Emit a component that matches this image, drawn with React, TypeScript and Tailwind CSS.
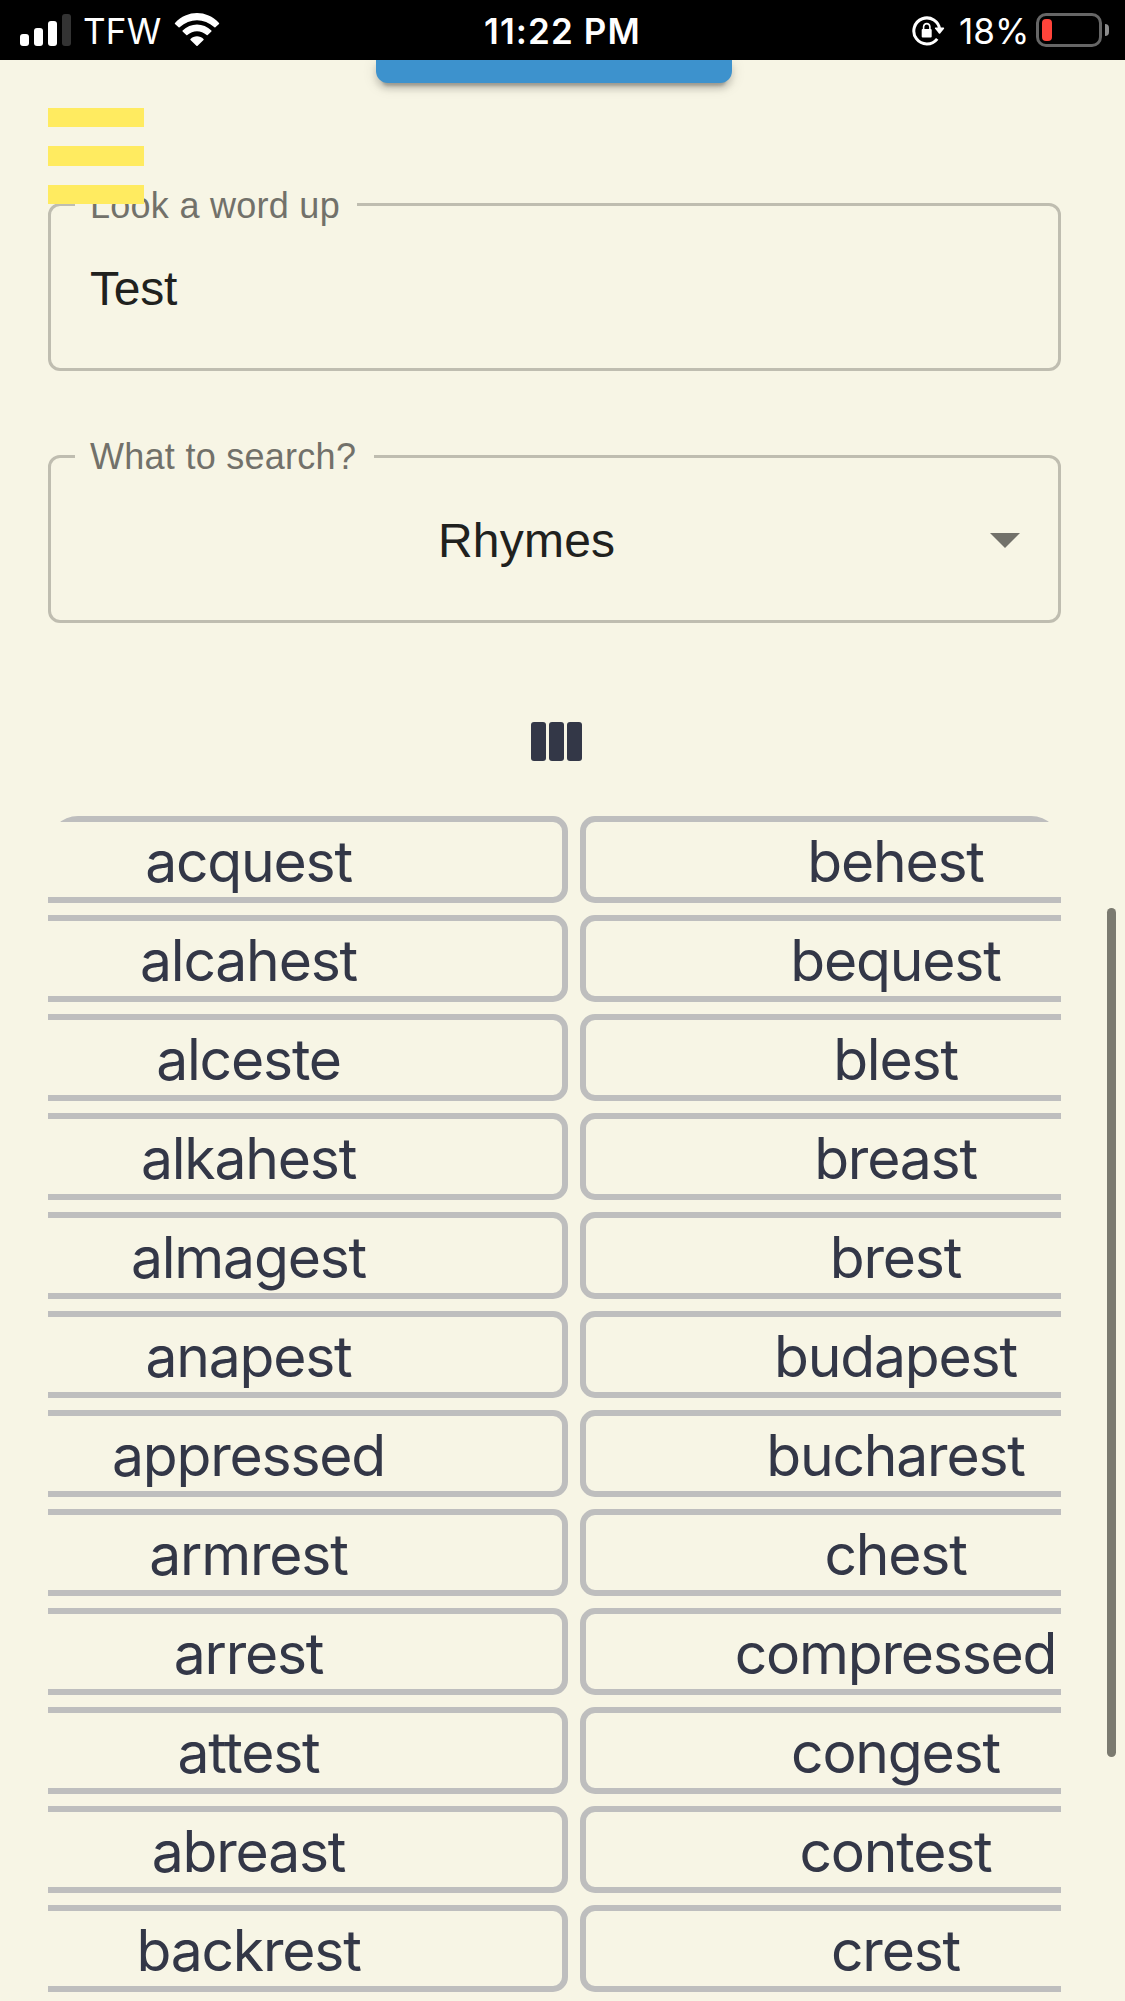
import type { ReactNode } from "react";

const rows: [string, string][] = [
  ["acquest", "behest"],
  ["alcahest", "bequest"],
  ["alceste", "blest"],
  ["alkahest", "breast"],
  ["almagest", "brest"],
  ["anapest", "budapest"],
  ["appressed", "bucharest"],
  ["armrest", "chest"],
  ["arrest", "compressed"],
  ["attest", "congest"],
  ["abreast", "contest"],
  ["backrest", "crest"],
];

function StatusBar() {
  return (
    <header className="relative z-20 flex h-[60px] shrink-0 items-center justify-between bg-black pr-4 pl-5 text-[35px] text-white">
      <div className="flex items-center">
        <div className="flex h-8 items-end gap-[5px]">
          <span className="h-3 w-[9px] rounded-[3px] bg-white" />
          <span className="h-[18px] w-[9px] rounded-[3px] bg-white" />
          <span className="h-[25px] w-[9px] rounded-[3px] bg-white" />
          <span className="h-8 w-[9px] rounded-[3px] bg-[#333]" />
        </div>
        <span className="ml-3 w-[77px] pt-[3px] tracking-[0.2px]">TFW</span>
        <svg className="ml-[14px]" width="46" height="34" viewBox="0 0 46 34">
          <path d="M1 10 C13.5 -3.2 32.5 -3.2 45 10 Q45.4 10.5 45 11 L41.4 14.3 Q40.9 14.7 40.4 14.3 C30 5 16 5 5.6 14.3 Q5.1 14.7 4.6 14.3 L1 11 Q0.6 10.5 1 10 Z" fill="#fff" />
          <path d="M8.6 17.6 C16.5 9.4 29.5 9.4 37.4 17.6 Q37.8 18.1 37.4 18.6 L33.7 22.1 Q33.2 22.5 32.7 22.1 C27 17 19 17 13.3 22.1 Q12.8 22.5 12.3 22.1 L8.6 18.6 Q8.2 18.1 8.6 17.6 Z" fill="#fff" />
          <path d="M16.5 26 C20 22.4 26 22.4 29.5 26 Q30 26.5 29.5 27 L23.6 32.7 Q23 33.2 22.4 32.7 L16.5 27 Q16 26.5 16.5 26 Z" fill="#fff" />
        </svg>
      </div>
      <div className="absolute left-[484px] pt-[3px] leading-[57px] font-semibold tracking-[1.1px] whitespace-nowrap">11:22 PM</div>
      <div className="flex items-center">
        <svg width="34" height="32" viewBox="0 0 34 32">
          <path d="M28.3 15.5 A13 13 0 1 0 25.7 24.3" transform="translate(-0.5 0.5)" fill="none" stroke="#fff" strokeWidth="3" />
          <path d="M23 14.5 Q22.6 13.5 23.6 13.5 L31.6 13.5 Q32.6 13.7 32 14.7 L28.2 19.4 Q27.5 20 26.9 19.4 Z" fill="#fff" />
          <rect x="9.7" y="15" width="10" height="8.5" rx="1" fill="#fff" />
          <path d="M11.6 15.5 V12.6 a3.2 3.6 0 0 1 6.3 0 V15.5" fill="none" stroke="#fff" strokeWidth="1.6" />
        </svg>
        <span className="ml-[13px] w-[70px] pt-[3px] whitespace-nowrap">18%</span>
        <div className="ml-[7px] h-[34px] w-[66px] rounded-[10px] border-3 border-[#666] p-[3px]">
          <div className="h-[22px] w-[10px] rounded-[4px] bg-[#ff443a]" />
        </div>
        <div className="ml-[3px] h-3 w-1 rounded-r-full bg-[#8c8c8c]" />
      </div>
    </header>
  );
}

function Field({ label, legendClass, children }: { label: string; legendClass: string; children: ReactNode }) {
  return (
    <fieldset className="h-[168px] rounded-[12px] border-3 border-[#bfbdb0] font-['Liberation_Sans',sans-serif] text-[48px] text-[#20211e]">
      <legend className={legendClass}>
        <span className="text-[36px] leading-none whitespace-nowrap text-[#72716a]">{label}</span>
      </legend>
      {children}
    </fieldset>
  );
}

export default function App() {
  return (
    <div className="relative flex h-[2001px] w-[1125px] flex-col overflow-hidden bg-[#f7f5e5] font-['Inter',sans-serif]">
      <StatusBar />
      <button className="ml-[376px] h-[23px] w-[356px] shrink-0 rounded-b-[12px] bg-[#3d92cd] shadow-[0_9px_3px_-6px_rgba(0,0,0,0.2),0_6px_6px_0_rgba(0,0,0,0.14),0_3px_15px_0_rgba(0,0,0,0.12)]" aria-label="Search" />
      <nav className="absolute top-[108px] left-12 z-10 flex h-24 w-24 flex-col justify-between">
        <span className="h-[19px] bg-[#ffeb60]" />
        <span className="h-5 bg-[#ffeb60]" />
        <span className="h-[19px] bg-[#ffeb60]" />
      </nav>
      <main className="mt-[120px] ml-12 flex w-[1013px] flex-col">
        <Field label="Look a word up" legendClass="ml-6 flex h-[3px] w-[282px] items-center pt-[2px] pl-[15px] tracking-[0.27px]">
          <div className="flex h-[165px] items-center pl-[39px]">
            <span className="tracking-[-0.2px]">Test</span>
          </div>
        </Field>
        <div className="h-[84px]" />
        <Field label="What to search?" legendClass="ml-6 flex h-[3px] w-[299px] items-center pt-px pl-[15px] tracking-[0.27px]">
          <div className="flex h-[165px] items-center justify-between pr-[38px] pl-[387px]">
            <span className="tracking-[0.2px]">Rhymes</span>
            <svg width="30" height="15" viewBox="0 0 30 15">
              <path d="M0 0H30L15 15Z" fill="#72716a" />
            </svg>
          </div>
        </Field>
        <div className="mt-[99px] ml-[483px] flex h-[39px] gap-[3px]">
          <span className="w-[15px] rounded-[3px] bg-[#333747]" />
          <span className="w-[15px] rounded-[3px] bg-[#333747]" />
          <span className="w-[15px] rounded-[3px] bg-[#333747]" />
        </div>
        <div className="mt-[55px] flex h-[1300px] overflow-hidden rounded-[30px]">
          <div className="-ml-[118px] grid shrink-0 auto-rows-[87px] grid-cols-[638px_632px] gap-3 text-[57px] leading-none tracking-[-1.2px] text-[#333747]">
            {rows.flat().map((word) => (
              <div key={word} className="flex items-center justify-center rounded-[15px] border-6 border-[#bebebe] pt-[4px] pr-px">
                {word}
              </div>
            ))}
          </div>
        </div>
      </main>
      <div className="absolute top-[908px] right-[9px] h-[849px] w-[9px] rounded-full bg-[#7b7a70]" />
    </div>
  );
}
